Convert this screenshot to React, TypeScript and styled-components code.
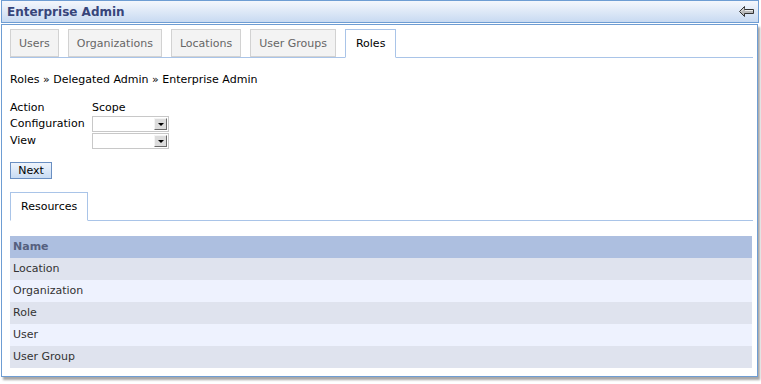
import React from "react";
import styled, { createGlobalStyle } from "styled-components";

const GlobalStyle = createGlobalStyle`
  body {
    margin: 0;
    background: #ffffff;
    font-family: "DejaVu Sans", Verdana, sans-serif;
    font-size: 11px;
    color: #000;
  }
`;

const Page = styled.div`
  width: 761px;
  height: 384px;
  padding-left: 1px;
  box-sizing: border-box;
`;

const TitleBar = styled.div`
  width: 758px;
  height: 23px;
  box-sizing: border-box;
  display: flex;
  align-items: center;
  justify-content: space-between;
  padding: 0 4px 0 5px;
  border: 1px solid #6e9dd3;
  background: linear-gradient(#f4f7fc, #c8daf2);
`;

const Title = styled.div`
  font-weight: bold;
  font-size: 12px;
  color: #37457a;
`;

const Panel = styled.div`
  width: 757px;
  margin-top: 1px;
  box-sizing: border-box;
  border: 1px solid #6e9dd3;
  padding: 4px 4px 8px 8px;
  box-shadow: 2px 3px 2px #a8a8a8;
`;

const TabBar = styled.div`
  display: flex;
  gap: 9px;
  border-bottom: 1px solid #a9c4e8;
  height: 28px;
`;

const Tab = styled.div<{ active?: boolean }>`
  box-sizing: border-box;
  display: flex;
  align-items: center;
  padding: 0 ${(p) => (p.active ? "10px" : "8px")};
  border: 1px solid ${(p) => (p.active ? "#a9c4e8" : "#d2d2d2")};
  border-bottom: 1px solid ${(p) => (p.active ? "#ffffff" : "#d2d2d2")};
  background: ${(p) => (p.active ? "#ffffff" : "#f3f3f3")};
  color: ${(p) => (p.active ? "#000" : "#666")};
  height: ${(p) => (p.active ? "29px" : "28px")};
`;

const Crumb = styled.div`
  margin-top: 15px;
  height: 14px;
  line-height: 14px;
`;

const Form = styled.div`
  margin-top: 14px;
  display: grid;
  grid-template-columns: 82px auto;
  grid-template-rows: 14px 17px 17px;
  align-items: center;
  line-height: 14px;
`;

const SelectBox = styled.div`
  width: 77px;
  height: 16px;
  box-sizing: border-box;
  border: 1px solid #c8c8c8;
  background: #fff;
  display: flex;
  justify-content: flex-end;
  padding: 1px;
`;

const DropButton = styled.div`
  width: 13px;
  height: 12px;
  box-sizing: border-box;
  border: 1px solid;
  border-color: #f4f4f4 #6a6a6a #6a6a6a #f4f4f4;
  background: #dcdcdc;
  display: flex;
  align-items: center;
  justify-content: center;
`;

const Arrow = styled.div`
  width: 0;
  height: 0;
  border-left: 3px solid transparent;
  border-right: 3px solid transparent;
  border-top: 3px solid #000;
  margin-top: 2px;
`;

const Button = styled.button`
  margin-top: 13px;
  width: 42px;
  height: 17px;
  padding: 0;
  font-family: inherit;
  font-size: 11px;
  color: #000;
  border: 1px solid #6a8fc2;
  background: linear-gradient(#eef4fc, #c9dcf4);
  display: block;
`;

const SubTabs = styled(TabBar)`
  margin-top: 13px;
`;

const Table = styled.div`
  margin-top: 15px;
  width: 742px;
`;

const Row = styled.div<{ shade: "head" | "odd" | "even" }>`
  height: 22px;
  line-height: 22px;
  padding-left: 3px;
  background: ${(p) =>
    p.shade === "head" ? "#adbfe0" : p.shade === "odd" ? "#dfe3ee" : "#eef2fe"};
  color: ${(p) => (p.shade === "head" ? "#55607e" : "#333")};
  font-weight: ${(p) => (p.shade === "head" ? "bold" : "normal")};
`;

const BackIcon = () => (
  <svg width="15" height="11" viewBox="0 0 15 11">
    <path
      d="M0.5 5.5 L5.5 0.5 L5.5 3.5 L14.5 3.5 L14.5 7.5 L5.5 7.5 L5.5 10.5 Z"
      fill="#b9b9b9"
      stroke="#333"
      strokeWidth="1"
    />
    <path d="M2 5.5 L5 2.5 M6 4.5 L14 4.5" stroke="#eee" strokeWidth="1" />
  </svg>
);

const Select = () => (
  <SelectBox>
    <DropButton>
      <Arrow />
    </DropButton>
  </SelectBox>
);

const tabs = ["Users", "Organizations", "Locations", "User Groups", "Roles"];
const resources = ["Location", "Organization", "Role", "User", "User Group"];

export default function App() {
  return (
    <Page>
      <GlobalStyle />
      <TitleBar>
        <Title>Enterprise Admin</Title>
        <BackIcon />
      </TitleBar>
      <Panel>
        <TabBar>
          {tabs.map((t) => (
            <Tab key={t} active={t === "Roles"}>
              {t}
            </Tab>
          ))}
        </TabBar>
        <Crumb>Roles » Delegated Admin » Enterprise Admin</Crumb>
        <Form>
          <div>Action</div>
          <div>Scope</div>
          <div>Configuration</div>
          <Select />
          <div>View</div>
          <Select />
        </Form>
        <Button>Next</Button>
        <SubTabs>
          <Tab active>Resources</Tab>
        </SubTabs>
        <Table>
          <Row shade="head">Name</Row>
          {resources.map((r, i) => (
            <Row key={r} shade={i % 2 === 0 ? "odd" : "even"}>
              {r}
            </Row>
          ))}
        </Table>
      </Panel>
    </Page>
  );
}
